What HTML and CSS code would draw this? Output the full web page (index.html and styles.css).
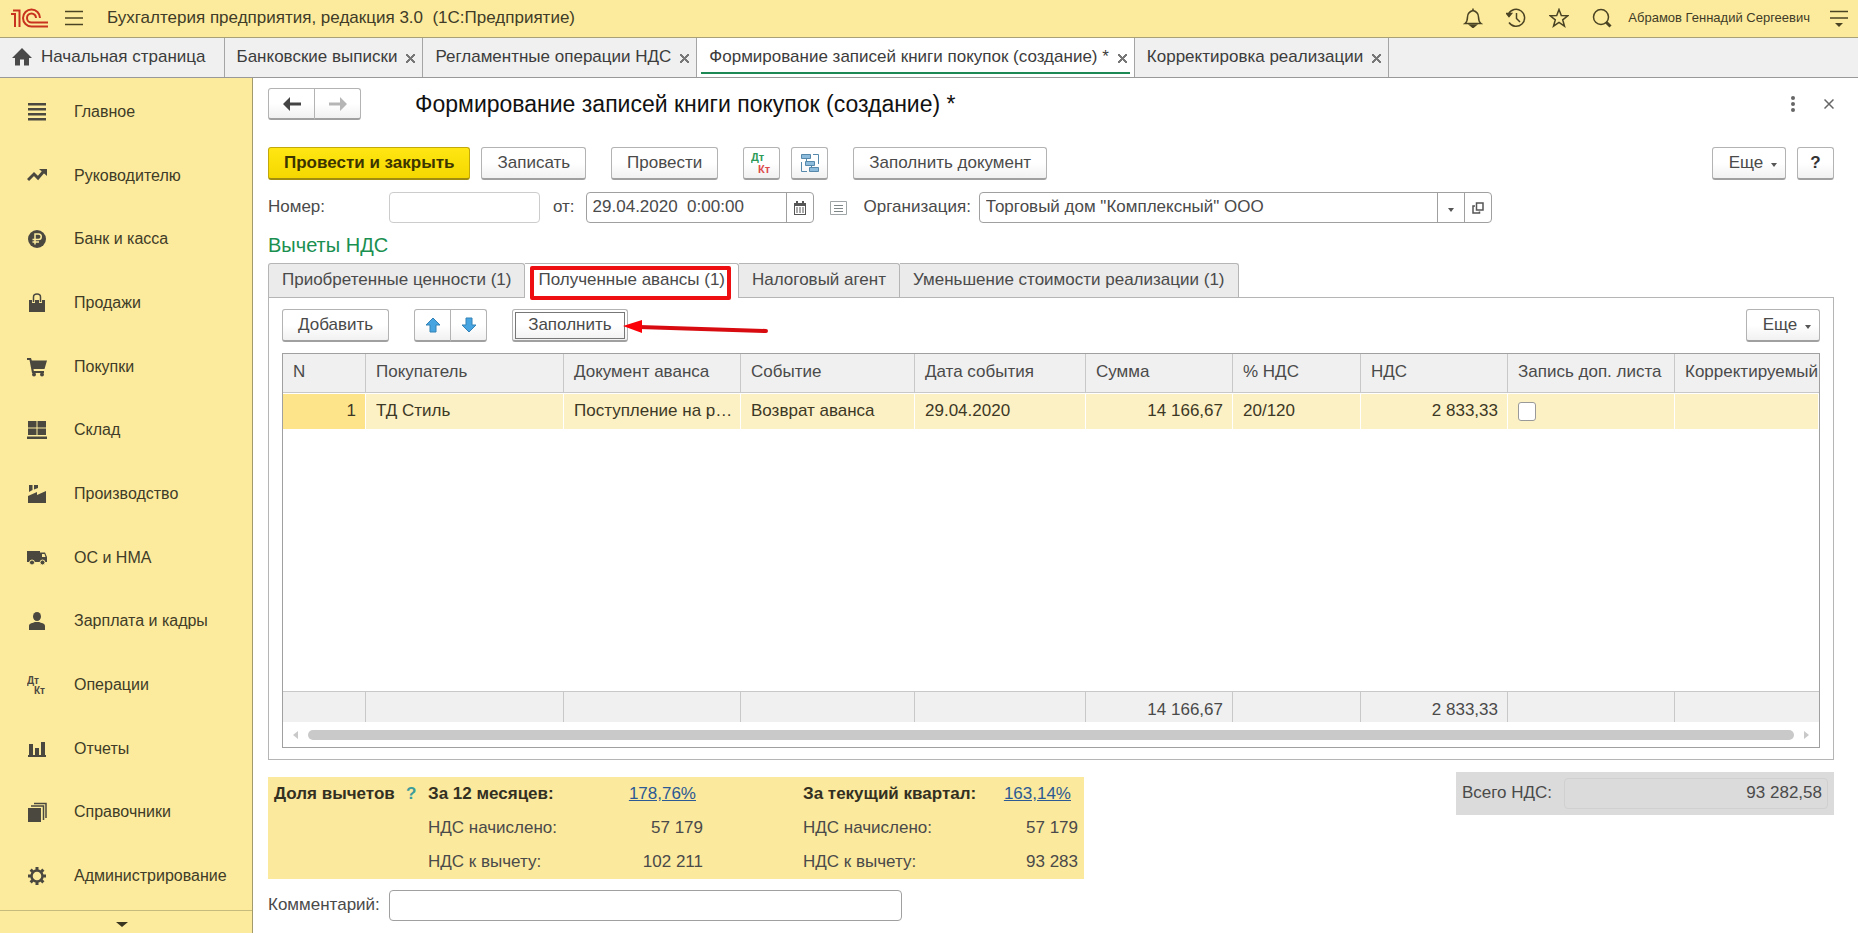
FILE: index.html
```html
<!DOCTYPE html>
<html lang="ru">
<head>
    <meta charset="UTF-8">
    <meta name="viewport" content="width=device-width, initial-scale=1.0">
    <title>Бухгалтерия предприятия</title>
    <link rel="stylesheet" href="styles.css">
</head>
<body>
    <header class="topbar">
        <svg class="logo" width="38" height="24" viewBox="0 0 38 24" fill="none" stroke="#c8331f" stroke-width="2">
            <path d="M0 8H4V21M2 4.500H8.500V21"/>
            <path d="M29 12A8.500 8.500 0 1 0 20.500 20.500H37"/>
            <path d="M25 12A4.500 4.500 0 1 0 20.500 16.500H37"/>
        </svg>
        <button class="icon-btn menu-btn" aria-label="Меню">
            <svg width="20" height="18" viewBox="0 0 20 18" stroke="#4a4424" stroke-width="1.500"><path d="M1 2.500H19M1 9H19M1 15.500H19"/></svg>
        </button>
        <span class="app-title">Бухгалтерия предприятия, редакция 3.0 &nbsp;(1С:Предприятие)</span>
        <div class="top-actions">
            <button class="icon-btn" aria-label="Уведомления">
                <svg width="20" height="20" viewBox="0 0 20 20" fill="none" stroke="#4a4424" stroke-width="1.500"><path d="M2 15.500C4 14 4.500 12 4.500 9C4.500 5 6.500 3.500 10 2.500C13.500 3.500 15.500 5 15.500 9C15.500 12 16 14 18 15.500Z"/><path d="M10 0.500V3"/><path d="M7 17H13L10 19.500Z" fill="#4a4424"/></svg>
            </button>
            <button class="icon-btn" aria-label="История">
                <svg width="20" height="20" viewBox="0 0 20 20" fill="none" stroke="#4a4424" stroke-width="1.500"><path d="M2.500 6A8.500 8.500 0 1 1 3 14.500"/><path d="M10.500 5V10.500L14 14"/><path d="M0.500 5.500L3 8.500L5.500 5.500Z" fill="#4a4424"/></svg>
            </button>
            <button class="icon-btn" aria-label="Избранное">
                <svg width="20" height="20" viewBox="0 0 20 20" fill="none" stroke="#4a4424" stroke-width="1.500"><path d="M10 1.500L12.300 7.500L18.800 7.800L13.700 11.800L15.500 18.200L10 14.500L4.500 18.200L6.300 11.800L1.200 7.800L7.700 7.500Z"/></svg>
            </button>
            <button class="icon-btn" aria-label="Поиск">
                <svg width="20" height="20" viewBox="0 0 20 20" fill="none" stroke="#4a4424" stroke-width="1.500"><circle cx="9" cy="9" r="7.500"/><path d="M14 14L18.500 18.500" stroke-width="3"/></svg>
            </button>
            <a class="user-name" href="#">Абрамов Геннадий Сергеевич</a>
            <button class="icon-btn" aria-label="Настройки">
                <svg width="20" height="18" viewBox="0 0 20 18" stroke="#4a4424" stroke-width="1.500"><path d="M1 2.500H19M1 9H19"/><path d="M6 14H14L10 18Z" fill="#4a4424" stroke="none"/></svg>
            </button>
        </div>
    </header>

    <nav class="window-tabs">
        <button class="window-tab home-tab">
            <svg width="20" height="18" viewBox="0 0 20 18" fill="#4a4a4a"><path d="M10 0L20 10H17V17.500H12V11.500H8V17.500H3V10H0Z"/></svg>
            Начальная страница
        </button>
        <button class="window-tab">Банковские выписки<span class="tab-x"></span></button>
        <button class="window-tab">Регламентные операции НДС<span class="tab-x"></span></button>
        <button class="window-tab current">Формирование записей книги покупок (создание) *<span class="tab-x"></span></button>
        <button class="window-tab">Корректировка реализации<span class="tab-x"></span></button>
    </nav>

    <div class="workspace">
        <aside class="sidebar">
            <nav class="sections">
                <a href="#"><svg viewBox="0 0 20 20"><path d="M1 1H19V3.500H1ZM1 6H19V8.500H1ZM1 11H19V13.500H1ZM1 16H19V18.500H1Z"/></svg>Главное</a>
                <a href="#"><svg viewBox="0 0 20 20"><path d="M1 14L7 8L11 12L17 5" fill="none" stroke="#4b4840" stroke-width="3"/><path d="M12 3H20V10Z"/></svg>Руководителю</a>
                <a href="#"><svg viewBox="0 0 20 20"><circle cx="10" cy="10" r="9"/><path d="M8 15.500V5H11.500A2.500 2.500 0 0 1 11.500 10.500H5.500M5.500 13H12" fill="none" stroke="#fceb9c" stroke-width="1.500"/></svg>Банк и касса</a>
                <a href="#"><svg viewBox="0 0 20 20"><path d="M2 7H18V19H2Z"/><path d="M6.500 10V4A3.500 3 0 0 1 13.500 4V10" fill="none" stroke="#fceb9c" stroke-width="3"/><path d="M6.500 9V4A3.500 3 0 0 1 13.500 4V9" fill="none" stroke="#4b4840" stroke-width="1.500"/></svg>Продажи</a>
                <a href="#"><svg viewBox="0 0 20 20"><path d="M0 1H4L4.800 3.500H20L17.500 12H6.500L6.800 14H17V16H5L2.500 3H0Z"/><circle cx="7" cy="17.500" r="2"/><circle cx="15" cy="17.500" r="2"/></svg>Покупки</a>
                <a href="#"><svg viewBox="0 0 20 20"><path d="M1 1H9.500V7.500H1ZM10.500 1H19V7.500H10.500ZM1 8.500H9.500V15H1ZM10.500 8.500H19V15H10.500ZM0 16.500H20V19H0Z"/></svg>Склад</a>
                <a href="#"><svg viewBox="0 0 20 20"><path d="M1 19V12L10 8V11L19 7V19Z"/><path d="M2 1H5.500V6L2 8ZM7 1H11V4L7 5.500Z"/></svg>Производство</a>
                <a href="#"><svg viewBox="0 0 20 20"><path d="M0 3H13V14H0Z"/><path d="M13 4.500H18L20 9V14H13Z"/><path d="M15 6H17.500L18.500 9H15Z" fill="#fceb9c"/><circle cx="5" cy="14.500" r="2.500" stroke="#fceb9c"/><circle cx="15.500" cy="14.500" r="2.500" stroke="#fceb9c"/></svg>ОС и НМА</a>
                <a href="#"><svg viewBox="0 0 20 20"><ellipse cx="10" cy="5.500" rx="4" ry="4.500"/><path d="M2 19V15C2 12 6 12 8 11H12C14 12 18 12 18 15V19Z"/></svg>Зарплата и кадры</a>
                <a href="#"><svg viewBox="0 0 20 20"><text x="0" y="9" class="dk">Дт</text><text x="7" y="19" class="dk">Кт</text></svg>Операции</a>
                <a href="#"><svg viewBox="0 0 20 20"><path d="M2 5H6V16H2ZM8 9H12V16H8ZM14 3H18V16H14ZM1 16H19V18H1Z"/></svg>Отчеты</a>
                <a href="#"><svg viewBox="0 0 20 20"><path d="M1 6H14V20H1Z"/><path d="M4 4H16.500V18M7 1.500H19V16" fill="none" stroke="#4b4840" stroke-width="1.500"/></svg>Справочники</a>
                <a href="#"><svg viewBox="0 0 20 20"><circle cx="10" cy="10" r="5.500" fill="none" stroke="#4b4840" stroke-width="2.500"/><path d="M10 1V4M10 16V19M1 10H4M16 10H19M3.600 3.600L5.800 5.800M14.200 14.200L16.400 16.400M3.600 16.400L5.800 14.200M14.200 5.800L16.400 3.600" stroke="#4b4840" stroke-width="3"/></svg>Администрирование</a>
            </nav>
            <button class="sections-more" aria-label="Еще разделы"><span class="caret caret-big"></span></button>
        </aside>

        <main class="document">
            <div class="doc-head">
                <div class="btn-pair">
                    <button class="btn" aria-label="Назад"><svg width="18" height="14" viewBox="0 0 18 14" fill="#444"><path d="M0 7L7 0V5.500H18V8.500H7V14Z"/></svg></button>
                    <button class="btn" aria-label="Вперед"><svg width="18" height="14" viewBox="0 0 18 14" fill="#b5b5b5"><path d="M18 7L11 0V5.500H0V8.500H11V14Z"/></svg></button>
                </div>
                <h1>Формирование записей книги покупок (создание) *</h1>
                <button class="icon-btn" aria-label="Действия"><svg width="6" height="16" viewBox="0 0 6 16" fill="#666"><circle cx="3" cy="2" r="2"/><circle cx="3" cy="8" r="2"/><circle cx="3" cy="14" r="2"/></svg></button>
                <button class="icon-btn close-btn" aria-label="Закрыть"><svg width="10" height="10" viewBox="0 0 10 10" stroke="#666" stroke-width="1.500"><path d="M0.500 0.500L9.500 9.500M9.500 0.500L0.500 9.500"/></svg></button>
            </div>

            <div class="toolbar">
                <button class="btn btn-main">Провести и закрыть</button>
                <button class="btn">Записать</button>
                <button class="btn group-start">Провести</button>
                <button class="btn btn-icon group-start" aria-label="Дт Кт">
                    <svg width="22" height="22" viewBox="0 0 22 22"><text x="0" y="9" class="dk dk-green">Дт</text><text x="7" y="21" class="dk dk-red">Кт</text></svg>
                </button>
                <button class="btn btn-icon" aria-label="Структура подчиненности">
                    <svg width="20" height="20" viewBox="0 0 20 20" fill="#8dbbdc" stroke="#5588ab"><path d="M1.500 1.500H10.500V5.500H1.500ZM5.500 8.500H14.500V12.500H5.500ZM9.500 14.500H18.500V18.500H9.500Z"/><path d="M6.500 5.500V8.500M11.500 12.500V14.500M13 1.500H18.500V11M1.500 9V18.500H7" fill="none"/></svg>
                </button>
                <button class="btn group-start">Заполнить документ</button>
                <button class="btn btn-more push-right">Еще<span class="caret"></span></button>
                <button class="btn btn-icon btn-help">?</button>
            </div>

            <div class="fields">
                <label class="field-label" for="number">Номер:</label>
                <input class="field number-field" type="text" id="number">
                <label class="from-label" for="date">от:</label>
                <div class="combo date-field">
                    <input type="text" id="date" value="29.04.2020  0:00:00">
                    <button aria-label="Календарь"><svg width="12" height="14" viewBox="0 0 12 14"><path d="M0 2H12V14H0Z" fill="#555"/><path d="M2 0H4V3H2ZM8 0H10V3H8Z" fill="#555"/><path d="M1 5H11V13H1Z" fill="#fff"/><path d="M2 7H10M2 9H10M2 11H10" stroke="#555" stroke-dasharray="2 1"/></svg></button>
                </div>
                <svg class="list-icon" width="17" height="14" viewBox="0 0 17 14" fill="none" stroke="#a0a6a8"><path d="M0.500 0.500H16.500V13.500H0.500Z"/><path d="M4 4.500H13M4 7.500H13M4 10.500H13" stroke="#7f8688"/></svg>
                <label class="org-label" for="org">Организация:</label>
                <div class="combo org-field">
                    <input type="text" id="org" value='Торговый дом "Комплексный" ООО'>
                    <button aria-label="Выбрать"><span class="caret"></span></button>
                    <button aria-label="Открыть"><svg width="12" height="12" viewBox="0 0 12 12" fill="none" stroke="#555" stroke-width="1.500"><path d="M4.500 1H11V8H4.500Z"/><path d="M3 4H1V11H7.500V9.500"/></svg></button>
                </div>
            </div>

            <h2>Вычеты НДС</h2>

            <div class="page-tabs">
                <button class="page-tab">Приобретенные ценности (1)</button>
                <button class="page-tab current">Полученные авансы (1)<span class="red-frame"></span></button>
                <button class="page-tab">Налоговый агент</button>
                <button class="page-tab">Уменьшение стоимости реализации (1)</button>
            </div>

            <section class="panel">
                <div class="toolbar">
                    <button class="btn">Добавить</button>
                    <div class="btn-pair group-start">
                        <button class="btn" aria-label="Вверх"><svg width="16" height="16" viewBox="0 0 16 16" fill="#46a5e0" stroke="#3482b5"><path d="M8 1L15 8H11V15H5V8H1Z"/></svg></button>
                        <button class="btn" aria-label="Вниз"><svg width="16" height="16" viewBox="0 0 16 16" fill="#46a5e0" stroke="#3482b5"><path d="M8 15L15 8H11V1H5V8H1Z"/></svg></button>
                    </div>
                    <div class="pointed group-start">
                        <button class="btn focused">Заполнить</button>
                        <svg class="red-arrow" width="146" height="16" viewBox="0 0 146 16"><path d="M16 8L143 12" stroke="#d80c10" stroke-width="4" stroke-linecap="round"/><path d="M0 7L19 1V14Z" fill="#fb0007"/></svg>
                    </div>
                    <button class="btn btn-more push-right">Еще<span class="caret"></span></button>
                </div>

                <div class="grid">
                    <table>
                        <colgroup>
                            <col class="c-n"><col class="c-buyer"><col class="c-doc"><col class="c-event"><col class="c-date">
                            <col class="c-sum"><col class="c-rate"><col class="c-vat"><col class="c-sheet"><col>
                        </colgroup>
                        <thead>
                            <tr><th>N</th><th>Покупатель</th><th>Документ аванса</th><th>Событие</th><th>Дата события</th><th>Сумма</th><th>% НДС</th><th>НДС</th><th>Запись доп. листа</th><th>Корректируемый</th></tr>
                        </thead>
                        <tbody>
                            <tr>
                                <td class="num selected">1</td><td>ТД Стиль</td><td>Поступление на р…</td><td>Возврат аванса</td><td>29.04.2020</td>
                                <td class="num">14 166,67</td><td>20/120</td><td class="num">2 833,33</td><td><input type="checkbox" aria-label="Запись доп. листа"></td><td></td>
                            </tr>
                            <tr class="filler"><td colspan="10"></td></tr>
                        </tbody>
                        <tfoot>
                            <tr><td></td><td></td><td></td><td></td><td></td><td class="num">14 166,67</td><td></td><td class="num">2 833,33</td><td></td><td></td></tr>
                        </tfoot>
                    </table>
                    <div class="scroll">
                        <span class="scroll-left"></span>
                        <span class="scroll-thumb"></span>
                        <span class="scroll-right"></span>
                    </div>
                </div>
            </section>

            <div class="summary">
                <div class="share">
                    <b>Доля вычетов</b>
                    <a class="hint" href="#">?</a>
                    <b>За 12 месяцев:</b>
                    <a class="percent" href="#">178,76%</a>
                    <b class="quarter">За текущий квартал:</b>
                    <a class="percent" href="#">163,14%</a>

                    <span class="year">НДС начислено:</span>
                    <span class="value">57 179</span>
                    <span class="quarter">НДС начислено:</span>
                    <span class="value">57 179</span>

                    <span class="year">НДС к вычету:</span>
                    <span class="value">102 211</span>
                    <span class="quarter">НДС к вычету:</span>
                    <span class="value">93 283</span>
                </div>
                <div class="total">
                    <label for="total">Всего НДС:</label>
                    <input type="text" id="total" value="93 282,58" readonly>
                </div>
            </div>

            <div class="comment">
                <label class="field-label" for="comment">Комментарий:</label>
                <input class="field comment-field" type="text" id="comment">
            </div>
        </main>
    </div>
</body>
</html>
```

FILE: styles.css
```css
* {
    box-sizing: border-box;
}

body {
    display: flex;
    flex-direction: column;
    height: 100vh;
    margin: 0;
    background-color: #ffffff;
    color: #4a4a4a;
    font-family: "Liberation Sans", Arial, sans-serif;
    font-size: 17px;
    line-height: 20px;
    overflow: hidden;
}

button, input {
    margin: 0;
    font: inherit;
    color: inherit;
}

button {
    padding: 0;
    border: none;
    background: none;
    white-space: nowrap;
    cursor: pointer;
}

a {
    color: inherit;
    text-decoration: none;
}

svg {
    flex-shrink: 0;
}

.icon-btn {
    display: flex;
    align-items: center;
    justify-content: center;
}

/* top bar */
.topbar {
    display: flex;
    align-items: center;
    flex-shrink: 0;
    height: 38px;
    padding: 0 9px 2px 11px;
    background-color: #fdeb9d;
    border-bottom: 1px solid #a9a077;
    color: #403c28;
}

.menu-btn {
    margin: 0 23px 0 15px;
}

.app-title {
    white-space: nowrap;
}

.top-actions {
    display: flex;
    align-items: center;
    gap: 23px;
    margin-left: auto;
}

.user-name {
    margin: 0 -4px 0 -7px;
    font-size: 13px;
}

/* opened windows */
.window-tabs {
    display: flex;
    flex-shrink: 0;
    height: 40px;
    background-color: #f0f0f0;
    border-bottom: 1px solid #999999;
}

.window-tab {
    position: relative;
    display: flex;
    align-items: center;
    gap: 9px;
    padding: 0 7px 2px 12px;
    border-right: 1px solid #a5a5a5;
    color: #3c3c3c;
}

.home-tab {
    gap: 9px;
    padding: 0 18px 2px 12px;
}

.window-tab.current {
    background-color: #ffffff;
}

.window-tab.current::after {
    content: "";
    position: absolute;
    left: 4px;
    right: 4px;
    bottom: 3px;
    height: 2px;
    background-color: #1d8a56;
}

.tab-x {
    width: 9px;
    height: 9px;
    margin-top: 4px;
    background:
        linear-gradient(45deg, transparent 42%, #777777 42%, #777777 58%, transparent 58%),
        linear-gradient(-45deg, transparent 42%, #777777 42%, #777777 58%, transparent 58%);
}

.workspace {
    display: flex;
    flex: 1;
    min-height: 0;
}

/* sections */
.sidebar {
    display: flex;
    flex-direction: column;
    flex-shrink: 0;
    width: 253px;
    background-color: #fdeb9d;
    border-right: 1px solid #a39a6c;
}

.sections {
    display: flex;
    flex-direction: column;
    flex: 1;
    padding: 2px 0;
}

.sections a {
    display: flex;
    align-items: center;
    flex: 1;
    gap: 27px;
    padding-left: 27px;
    color: #403c28;
    font-size: 16px;
}

.sections svg {
    width: 20px;
    height: 20px;
    fill: #4b4840;
}

.dk {
    font-size: 10px;
    font-weight: bold;
}

.sections-more {
    display: flex;
    align-items: center;
    justify-content: center;
    height: 23px;
    padding-right: 8px;
    border-top: 1px solid #c7bb7c;
}

/* document form */
.document {
    display: flex;
    flex-direction: column;
    flex: 1;
    min-width: 0;
    padding: 10px 24px 12px 15px;
}

.doc-head {
    display: flex;
    align-items: center;
    height: 32px;
}

.doc-head h1 {
    flex: 1;
    margin: 0 0 0 54px;
    font-size: 23px;
    font-weight: normal;
    line-height: 28px;
    color: #111111;
}

.close-btn {
    width: 10px;
    margin-left: 28px;
}

.btn {
    display: flex;
    align-items: center;
    justify-content: center;
    height: 33px;
    padding: 0 15px 1px;
    border: 1px solid #b3b3b3;
    border-bottom: 2px solid #a0a0a0;
    border-radius: 3px;
    background: linear-gradient(#ffffff 50%, #f1f1f1);
}

.btn-pair {
    display: flex;
}

.btn-pair .btn {
    width: 37px;
    padding: 0;
}

.doc-head .btn-pair .btn {
    width: 47px;
    height: 32px;
}

.btn-pair .btn:last-child {
    margin-left: -1px;
    border-radius: 0 3px 3px 0;
}

.btn-pair .btn:first-child {
    border-radius: 3px 0 0 3px;
}

.toolbar {
    display: flex;
    gap: 11px;
}

.document > .toolbar {
    margin-top: 27px;
}

.toolbar .group-start {
    margin-left: 14px;
}

.toolbar .push-right {
    margin-left: auto;
}

.btn-main {
    border-color: #c2a80a;
    border-bottom-color: #a08c10;
    background: linear-gradient(#ffe713, #f5d800);
    color: #3c3400;
    font-weight: bold;
}

.btn-icon {
    width: 37px;
    padding: 0;
}

.btn-icon .dk {
    font-size: 11px;
}

.btn-help {
    color: #333333;
    font-weight: bold;
}

.btn-more {
    gap: 8px;
    width: 74px;
    padding: 0 0 1px 8px;
}

.dk-green {
    fill: #2d9a57;
}

.dk-red {
    fill: #dd4a4a;
}

.caret {
    margin-top: 4px;
    border: 3px solid transparent;
    border-top: 4px solid #555555;
    border-bottom: none;
}

.caret-big {
    border-width: 5px 6px 0;
    border-top-color: #3a3520;
}

/* fields row */
.fields, .comment {
    display: flex;
    align-items: center;
}

.fields {
    margin-top: 12px;
}

.field-label {
    width: 121px;
}

label {
    padding-bottom: 2px;
}

.field, .combo {
    height: 31px;
    border: 1px solid #a0a0a0;
    border-radius: 4px;
    background-color: #ffffff;
}

.number-field {
    width: 151px;
    border-color: #cccccc;
}

.from-label {
    margin: 0 11px 0 13px;
}

.combo {
    display: flex;
}

.combo input {
    flex: 1;
    min-width: 0;
    padding: 0 6px 2px;
    border: none;
    background: none;
    white-space: pre;
}

.combo button {
    display: flex;
    align-items: center;
    justify-content: center;
    width: 27px;
    border-left: 1px solid #a0a0a0;
}

.date-field {
    width: 228px;
}

.list-icon {
    margin: 0 17px 0 16px;
}

.org-label {
    margin-right: 8px;
}

.org-field {
    width: 513px;
}

.document h2 {
    margin: 10px 0 6px;
    color: #1a8f50;
    font-size: 20px;
    font-weight: normal;
    line-height: 24px;
}

/* page tabs */
.page-tabs {
    display: flex;
    height: 34px;
}

.page-tab {
    position: relative;
    padding: 0 13px 2px;
    border: 1px solid #b5b5b5;
    border-left-width: 0;
    border-bottom: none;
    border-radius: 0 3px 0 0;
    background-color: #ebebeb;
}

.page-tab:first-child {
    border-left-width: 1px;
    border-radius: 3px 3px 0 0;
}

.page-tab.current {
    z-index: 1;
    margin-bottom: -1px;
    padding-bottom: 3px;
    background-color: #ffffff;
}

.red-frame {
    position: absolute;
    top: 2px;
    right: 7px;
    bottom: -2px;
    left: 5px;
    border: 4px solid #ee0f12;
    border-radius: 2px;
}

.panel {
    display: flex;
    flex-direction: column;
    flex: 1;
    min-height: 0;
    padding: 11px 13px;
    border: 1px solid #b5b5b5;
}

.btn.focused {
    outline: 1px solid #777777;
    outline-offset: -4px;
}

.pointed {
    position: relative;
}

.red-arrow {
    position: absolute;
    left: 111px;
    top: 10px;
}

.grid {
    display: flex;
    flex-direction: column;
    flex: 1;
    min-height: 0;
    margin-top: 11px;
    border: 1px solid #a0a0a0;
}

.grid table {
    flex: 1;
    width: 100%;
    height: 1px;
    table-layout: fixed;
    border-collapse: separate;
    border-spacing: 0;
}

.c-n { width: 83px; }
.c-buyer { width: 198px; }
.c-doc { width: 177px; }
.c-event { width: 174px; }
.c-date { width: 171px; }
.c-sum { width: 147px; }
.c-rate { width: 128px; }
.c-vat { width: 147px; }
.c-sheet { width: 167px; }

.grid th, .grid td {
    padding: 0 9px 0 10px;
    font-weight: normal;
    text-align: left;
    white-space: nowrap;
}

.grid th {
    height: 39px;
    padding-bottom: 3px;
    border-right: 1px solid #c8c8c8;
    border-bottom: 1px solid #c8c8c8;
    background-color: #f0f0f0;
}

.grid th:last-child, .grid tfoot td:last-child {
    padding-right: 0;
    border-right: none;
}

.grid tbody td {
    height: 37px;
    padding-bottom: 2px;
    border: solid #ffffff;
    border-width: 1px 1px 1px 0;
    background-color: #fcf1c4;
    color: #3c3826;
}

.grid .num {
    text-align: right;
}

.grid tbody .selected {
    background-color: #fde48a;
}

.grid .filler td {
    height: auto;
    background-color: #ffffff;
}

.grid tfoot td {
    height: 31px;
    padding-top: 6px;
    border-top: 1px solid #c8c8c8;
    border-right: 1px solid #c8c8c8;
    background-color: #f0f0f0;
}

.grid input {
    display: block;
    width: 18px;
    height: 19px;
    margin-top: 2px;
    appearance: none;
    border: 1px solid #999999;
    border-radius: 3px;
    background-color: #ffffff;
}

.scroll {
    display: flex;
    align-items: center;
    gap: 10px;
    height: 25px;
    padding: 0 10px;
}

.scroll-thumb {
    flex: 1;
    height: 10px;
    border-radius: 5px;
    background-color: #c9c9c9;
}

.scroll-left, .scroll-right {
    border: 4px solid transparent;
    border-right: 5px solid #c9c9c9;
    border-left: none;
}

.scroll-right {
    border-right: none;
    border-left: 5px solid #c9c9c9;
}

/* totals */
.summary {
    display: flex;
    justify-content: space-between;
    align-items: flex-start;
    margin-top: 12px;
}

.share {
    display: grid;
    grid-template-columns: 132px 22px 155px 120px 255px 120px;
    grid-auto-rows: 34px;
    align-items: center;
    width: 816px;
    height: 102px;
    margin-top: 5px;
    padding-left: 6px;
    background-color: #fbe99d;
}

.share b {
    color: #333022;
}

.share .year {
    grid-column: 3;
}

.share .quarter {
    padding-left: 100px;
    white-space: nowrap;
}

.share .value {
    text-align: right;
}

.percent {
    padding-right: 7px;
    color: #2c5a94;
    text-align: right;
    text-decoration: underline;
}

.hint {
    color: #3c9c9c;
    font-weight: bold;
}

.total {
    display: flex;
    align-items: center;
    gap: 12px;
    height: 43px;
    padding: 0 6px;
    background-color: #dbdbdb;
}

.total input {
    width: 264px;
    height: 31px;
    padding: 0 5px 2px;
    border: 1px solid #d0d0d0;
    border-radius: 4px;
    background: none;
    text-align: right;
}

.comment {
    margin-top: 11px;
}

.comment-field {
    width: 513px;
}
```
